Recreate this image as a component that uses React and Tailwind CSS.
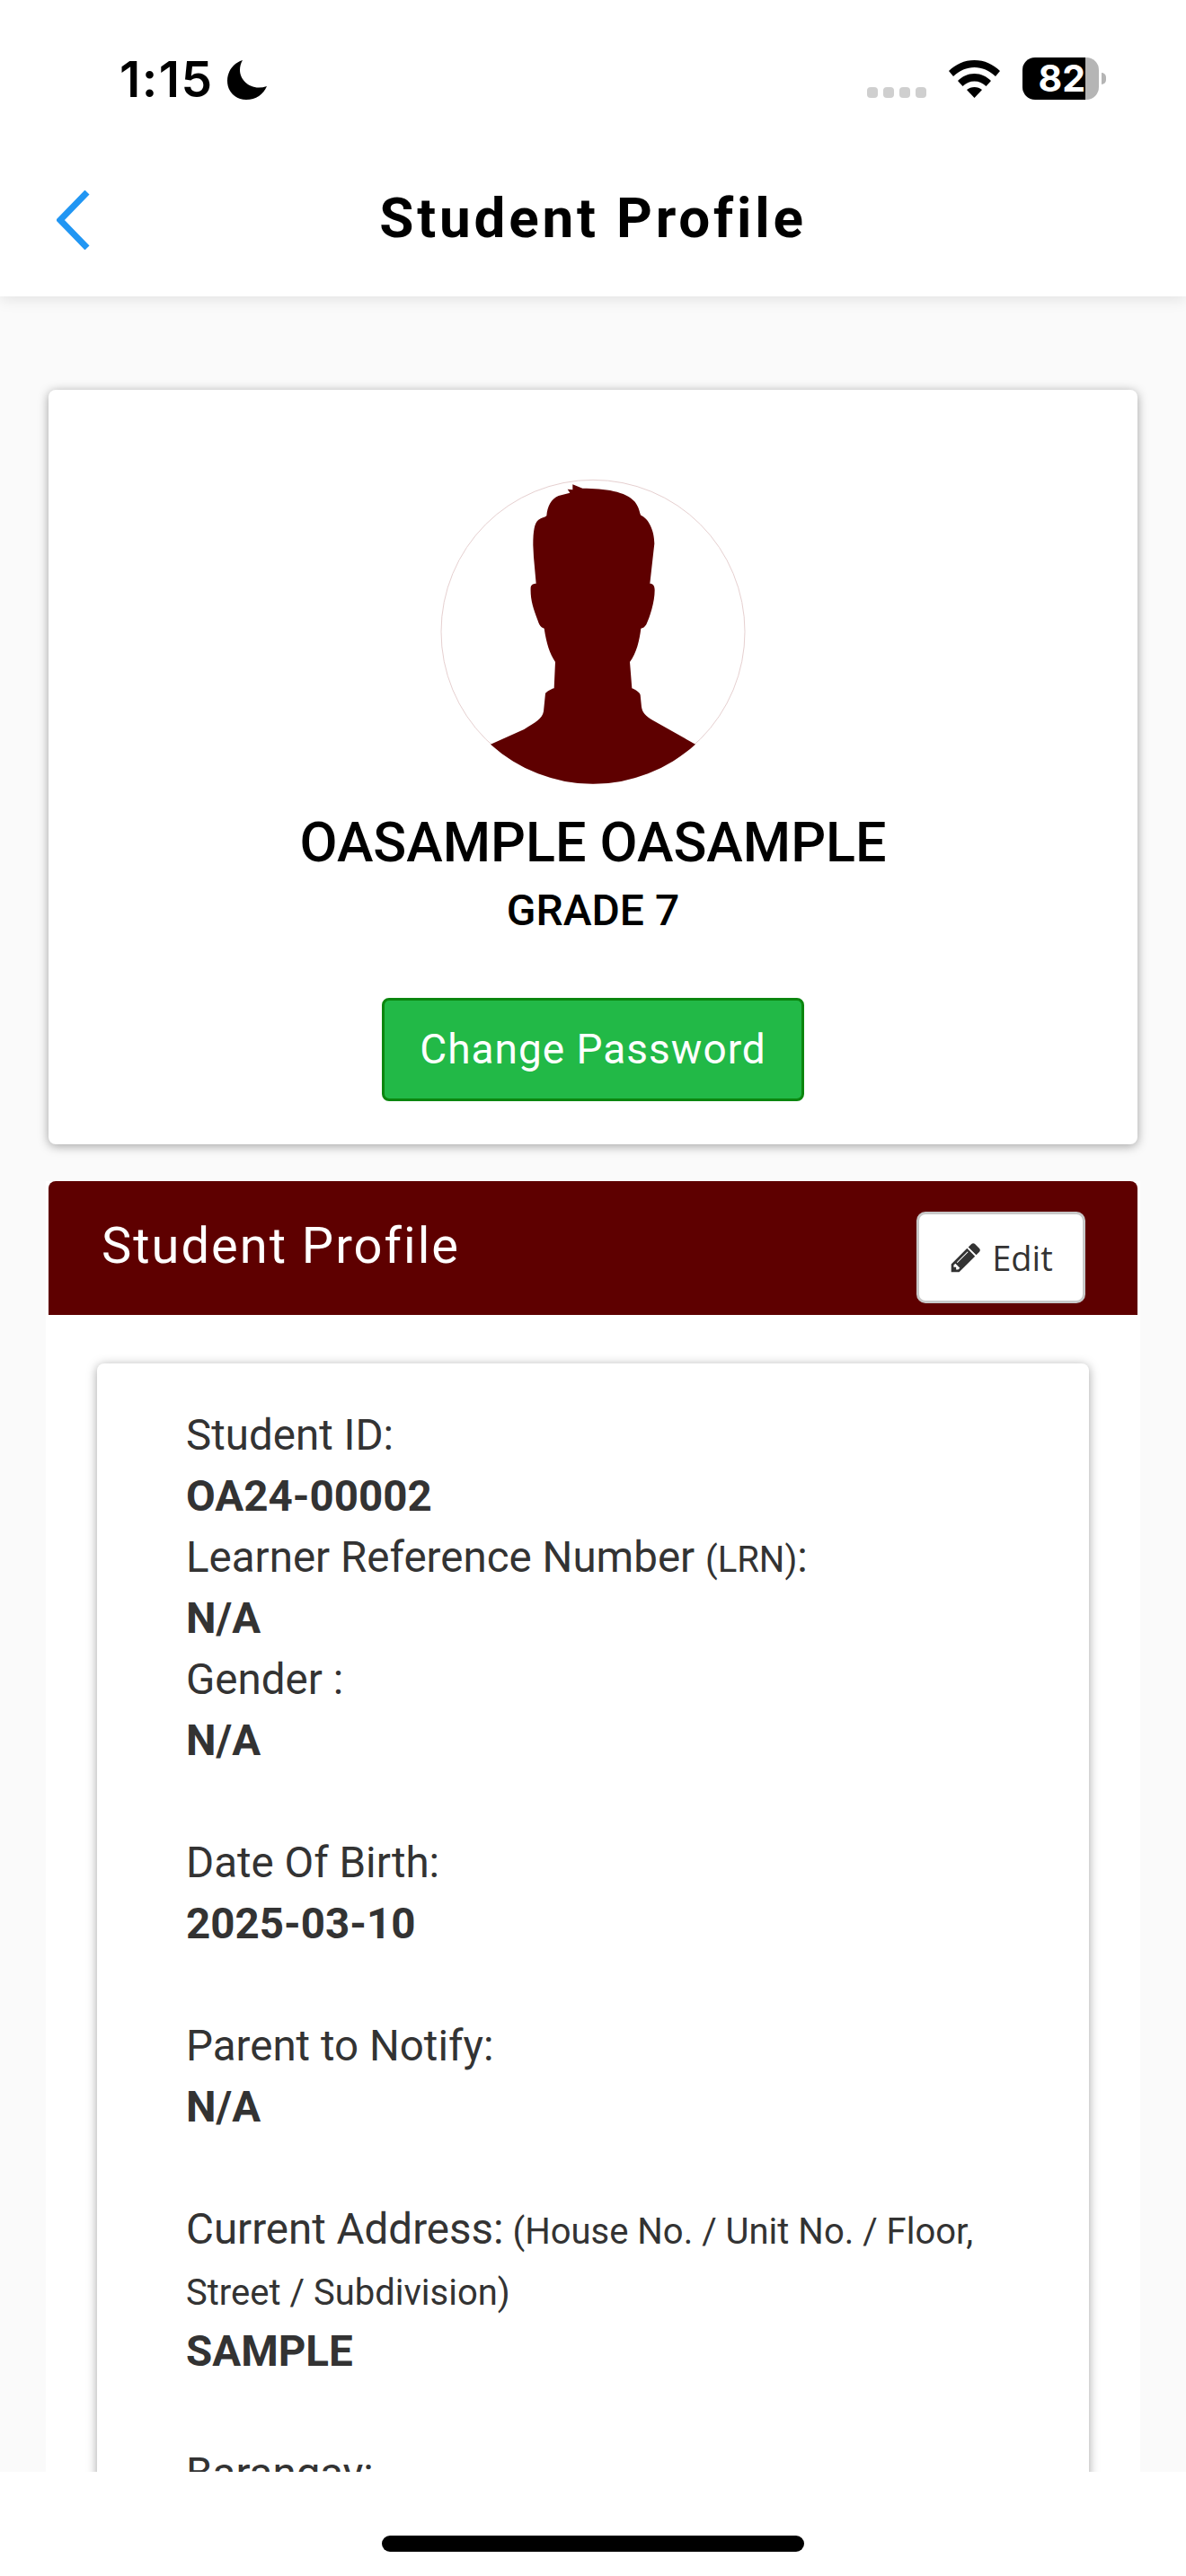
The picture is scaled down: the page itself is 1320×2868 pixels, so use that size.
import React from "react";

const roboto = "font-['Roboto',sans-serif]";

function Field({ label, small, value, gap = true }) {
  return (
    <div className={gap ? "mb-[68px]" : ""}>
      <p>
        {label}
        {small && <span className="text-[40px] leading-[1]"> {small}</span>}
      </p>
      {value && <p className="font-bold">{value}</p>}
    </div>
  );
}

function Silhouette() {
  return (
    <svg viewBox="150 68 1020 1020" className="w-[340px] h-[340px]">
      <circle cx="660" cy="579" r="507" fill="#fff" stroke="#e6d0d0" strokeWidth="3" />
      <path
        fill="#5e0000"
        d="M318 955 L430 905 C470 880 490 870 495 845 L501 785 C505 780 520 770 530 768 L534 680 C515 650 505 620 497 568 C485 565 480 555 475 540 C460 500 450 470 452 430 C455 420 462 418 470 418 L462 330 L460 290 C460 240 465 215 478 205 C488 198 498 198 505 192 C508 160 520 135 545 125 L583 115 L575 103 L592 105 L592 87 L625 100 C700 100 770 110 800 145 C815 165 815 180 820 190 C845 200 865 240 865 285 L850 418 C860 418 866 425 866 440 C866 480 850 530 838 555 C832 565 825 568 820 568 C815 610 805 650 783 680 L790 768 C800 772 815 780 818 790 L822 830 C825 850 835 860 860 875 L1002 955 A508 508 0 0 1 318 955 Z"
      />
    </svg>
  );
}

function StatusBar() {
  return (
    <div className="h-[120px] flex items-start pt-[64px]">
      <span className="ml-[133px] mt-[-4px] text-[55px] leading-[56px] font-semibold tracking-[1.5px] text-black font-['Inter',sans-serif]">
        1:15
      </span>
      <svg viewBox="0 0 44 44" className="w-[44px] h-[44px] ml-[15px] mt-[3px]">
        <path fill="#000" d="M17 0 C7 3 0 12 0 23 C0 35 9 44 21 44 C32 44 40 38 44 29 C41 30 38 30.500 35 30.500 C23 30.500 14 21 14 11 C14 7 15 3 17 0 Z" />
      </svg>
      <div className="ml-auto flex items-start">
        <div className="flex gap-[6px] mt-[33px]">
          <div className="w-[12px] h-[12px] rounded-[4px] bg-[#cfcfcf]" />
          <div className="w-[12px] h-[12px] rounded-[4px] bg-[#cfcfcf]" />
          <div className="w-[12px] h-[12px] rounded-[4px] bg-[#cfcfcf]" />
          <div className="w-[12px] h-[12px] rounded-[4px] bg-[#cfcfcf]" />
        </div>
        <svg viewBox="0 0 57 42" className="w-[57px] h-[42px] ml-[25px] mt-[3px]">
          <path fill="#000" d="M28.5 0 C17 0 8 4.500 0 12 L5 18 C12 11.500 20 8 28.500 8 C37 8 45 11.500 52 18 L57 12 C49 4.500 40 0 28.500 0 Z" />
          <path fill="#000" d="M28.500 15 C21 15 15 18 10 23 L15.500 29 C19 25.500 23.500 23.500 28.500 23.500 C33.500 23.500 38 25.500 41.500 29 L47 23 C42 18 36 15 28.500 15 Z" />
          <path fill="#000" d="M28.500 30 C25 30 22.500 31 20 33 L28.500 42 L37 33 C34.500 31 32 30 28.500 30 Z" />
        </svg>
        <div className="ml-[25px] w-[85px] h-[47px] flex">
          <div className="w-[70px] h-full bg-black rounded-l-[14px] flex items-center justify-end">
            <span className="text-[41px] leading-[47px] font-bold text-white font-['Inter',sans-serif]">82</span>
          </div>
          <div className="w-[15px] h-full bg-[#b5b5b5] rounded-r-[14px]" />
        </div>
        <div className="w-[5px] h-[13px] mt-[17px] ml-[3px] rounded-r-[5px] bg-[#b5b5b5] mr-[89px]" />
      </div>
    </div>
  );
}

export default function App() {
  return (
    <div className={`w-[1320px] h-[2868px] flex flex-col overflow-hidden bg-[#fafafa] ${roboto}`}>
      <div className="h-[330px] relative z-10 bg-white shadow-[0_3px_16px_rgba(0,0,0,0.10)] flex flex-col">
        <StatusBar />
        <div className="relative flex-1 flex justify-center">
          <svg viewBox="0 0 38 66" className="absolute left-[63px] top-[92px] w-[38px] h-[66px]">
            <path d="M34 2 L4 33 L34 64" fill="none" stroke="#2196f3" strokeWidth="7" />
          </svg>
          <span className="mt-[88px] text-[62px] leading-[70px] font-bold tracking-[3.8px] text-black">Student Profile</span>
        </div>
      </div>

      <div className="flex-1 overflow-hidden px-[54px] pt-[104px]">
        <div className="h-[840px] bg-white rounded-[8px] shadow-[0_2px_12px_rgba(0,0,0,0.36)] flex flex-col items-center pt-[99px]">
          <Silhouette />
          <h1 className="mt-[30px] text-[61px] leading-[70px] font-medium text-black">OASAMPLE OASAMPLE</h1>
          <h2 className="mt-[13px] text-[48px] leading-[56px] font-medium text-black">GRADE 7</h2>
          <button className="mt-[69px] w-[470px] h-[115px] rounded-[8px] border-[3px] border-[#0b860f] bg-[#22b947] text-white text-[46px] leading-[46px] pb-[2px] tracking-[1px]">
            Change Password
          </button>
        </div>

        <div className="mt-[41px] mx-[-3px] bg-white">
          <div className="mx-[3px] h-[149px] bg-[#5e0000] rounded-t-[8px] flex items-start justify-between pl-[59px] pr-[58px]">
            <span className="mt-[36px] text-[56px] leading-[72px] text-white tracking-[2px]">Student Profile</span>
            <button className="mt-[34px] w-[188px] h-[102px] rounded-[10px] border-[3px] border-[#c8c8c8] bg-white flex items-center justify-center gap-[10px] text-[38px] text-[#333] font-['Open_Sans',sans-serif]">
              <svg viewBox="0 0 1792 1792" className="w-[38px] h-[38px]" fill="#333">
                <path d="M491 1536l91-91-235-235-91 91v107h128v128h107zm523-928q0-22-22-22-10 0-17 7l-542 542q-7 7-7 17 0 22 22 22 10 0 17-7l542-542q7-7 7-17zm-54-192l416 416-832 832h-416v-416zm683 96q0 53-37 90l-166 166-416-416 166-165q36-38 90-38 53 0 91 38l235 234q37 39 37 91z" />
              </svg>
              Edit
            </button>
          </div>
          <div className="mt-[54px] mx-[57px] h-[1300px] bg-white rounded-t-[8px] shadow-[0_2px_12px_rgba(0,0,0,0.36)] pt-[46px] pl-[99px] pr-[110px] text-[47.5px] leading-[68px] text-[#333]">
            <Field label="Student ID:" value="OA24-00002" gap={false} />
            <p>
              Learner Reference Number <span className="text-[40px] leading-[1]">(LRN)</span>:
            </p>
            <p className="font-bold">N/A</p>
            <Field label="Gender :" value="N/A" />
            <Field label="Date Of Birth:" value="2025-03-10" />
            <Field label="Parent to Notify:" value="N/A" />
            <Field label="Current Address:" small="(House No. / Unit No. / Floor, Street / Subdivision)" value="SAMPLE" />
            <Field label="Barangay:" />
          </div>
        </div>
      </div>

      <div className="h-[116px] relative z-10 bg-white flex justify-center pt-[71px]">
        <div className="w-[470px] h-[18px] rounded-full bg-black" />
      </div>
    </div>
  );
}
